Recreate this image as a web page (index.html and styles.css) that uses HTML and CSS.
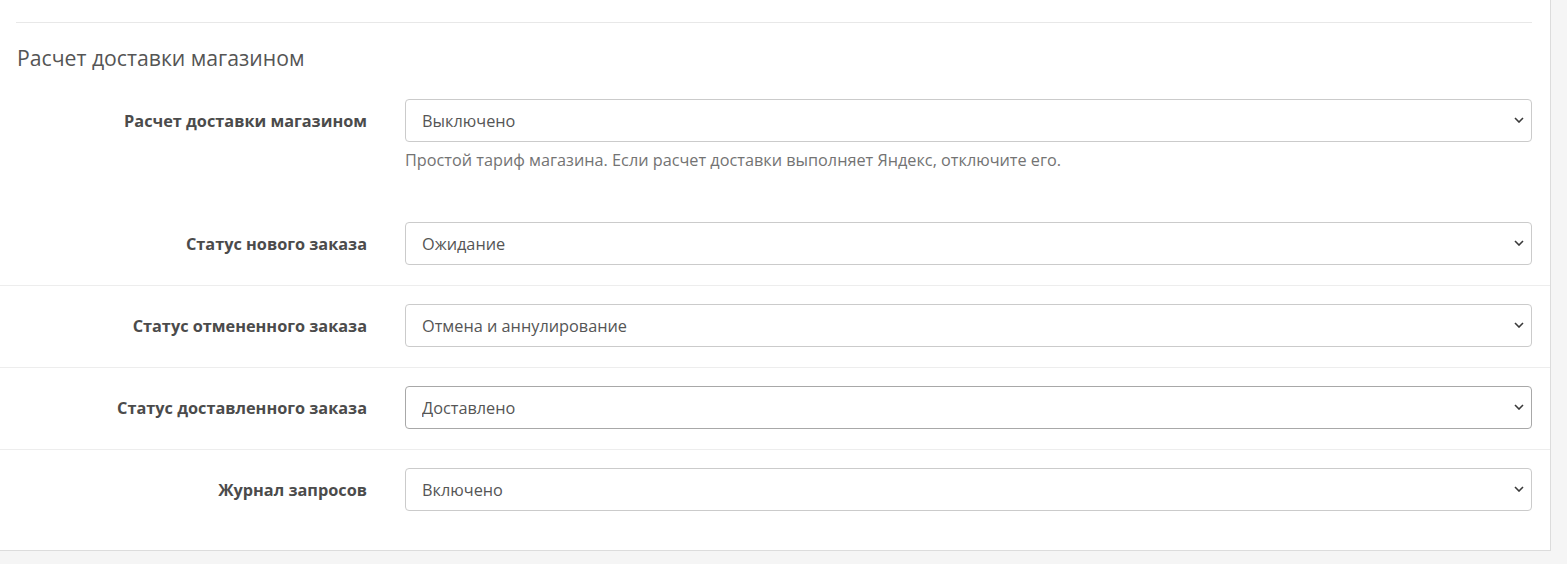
FILE: index.html
```html
<!DOCTYPE html>
<html lang="ru">
<head>
    <meta charset="UTF-8">
    <meta name="viewport" content="width=device-width, initial-scale=1.0">
    <title>Расчет доставки магазином</title>
    <link rel="stylesheet" href="styles.css">
</head>
<body>
    <div class="panel">
        <div class="section">
            <h3 class="section-title">Расчет доставки магазином</h3>
        </div>

        <div class="form-row first">
            <label for="shop-calc">Расчет доставки магазином</label>
            <div class="control">
                <div class="select-wrap">
                    <select id="shop-calc">
                        <option>Выключено</option>
                        <option>Включено</option>
                    </select>
                    <svg class="chevron" viewBox="0 0 10 6" width="10" height="6"><path d="M1 1l4 4 4-4"/></svg>
                </div>
                <div class="help">Простой тариф магазина. Если расчет доставки выполняет Яндекс, отключите его.</div>
            </div>
        </div>

        <div class="form-row first">
            <label for="status-new">Статус нового заказа</label>
            <div class="control">
                <div class="select-wrap">
                    <select id="status-new">
                        <option>Ожидание</option>
                    </select>
                    <svg class="chevron" viewBox="0 0 10 6" width="10" height="6"><path d="M1 1l4 4 4-4"/></svg>
                </div>
            </div>
        </div>

        <div class="form-row">
            <label for="status-cancel">Статус отмененного заказа</label>
            <div class="control">
                <div class="select-wrap">
                    <select id="status-cancel">
                        <option>Отмена и аннулирование</option>
                    </select>
                    <svg class="chevron" viewBox="0 0 10 6" width="10" height="6"><path d="M1 1l4 4 4-4"/></svg>
                </div>
            </div>
        </div>

        <div class="form-row">
            <label for="status-done">Статус доставленного заказа</label>
            <div class="control">
                <div class="select-wrap hover">
                    <select id="status-done">
                        <option>Доставлено</option>
                    </select>
                    <svg class="chevron" viewBox="0 0 10 6" width="10" height="6"><path d="M1 1l4 4 4-4"/></svg>
                </div>
            </div>
        </div>

        <div class="form-row">
            <label for="log">Журнал запросов</label>
            <div class="control">
                <div class="select-wrap">
                    <select id="log">
                        <option>Включено</option>
                        <option>Выключено</option>
                    </select>
                    <svg class="chevron" viewBox="0 0 10 6" width="10" height="6"><path d="M1 1l4 4 4-4"/></svg>
                </div>
            </div>
        </div>
    </div>
</body>
</html>
```

FILE: styles.css
```css
body {
    font-family: 'Open Sans', 'Noto Sans', sans-serif;
    margin: 0;
    padding: 0;
    background-color: #f5f5f5;
    color: #555;
}
.panel {
    width: 1550px;
    background-color: #fff;
    border-right: 1px solid #dcdcdc;
    border-bottom: 1px solid #dcdcdc;
    padding-top: 22px;
    padding-bottom: 19px;
}
.section {
    margin: 0 18px 0 16px;
    border-top: 1px solid #e8e8e8;
}
.section-title {
    margin: 23px 0 10px 1px;
    font-size: 21.2px;
    line-height: 24px;
    font-weight: 400;
    color: #555;
}
.form-row {
    display: grid;
    grid-template-columns: 367px 1127px;
    column-gap: 38px;
    align-items: start;
    padding: 18px 0 20px;
    border-top: 1px solid #ededed;
}
.form-row.first {
    border-top-color: transparent;
}
.form-row label {
    text-align: right;
    font-size: 16.3px;
    font-weight: 700;
    color: #4b4b4b;
    padding-top: 2px;
    line-height: 41px;
}
.select-wrap {
    position: relative;
}
.select-wrap select {
    display: block;
    width: 100%;
    height: 43px;
    padding: 0 40px 0 16px;
    margin: 0;
    border: 1px solid #cbcbcb;
    border-radius: 4px;
    background-color: #fff;
    font-family: inherit;
    font-size: 16.3px;
    color: #555;
    -webkit-appearance: none;
    appearance: none;
}
.select-wrap.hover select {
    border-color: #a8a8a8;
}
.chevron {
    position: absolute;
    right: 8px;
    top: 18px;
    fill: none;
    stroke: #3a3a3a;
    stroke-width: 1.6;
}
.help {
    margin-top: 7px;
    margin-bottom: 12px;
    font-size: 16.25px;
    line-height: 22px;
    color: #737373;
}
```
